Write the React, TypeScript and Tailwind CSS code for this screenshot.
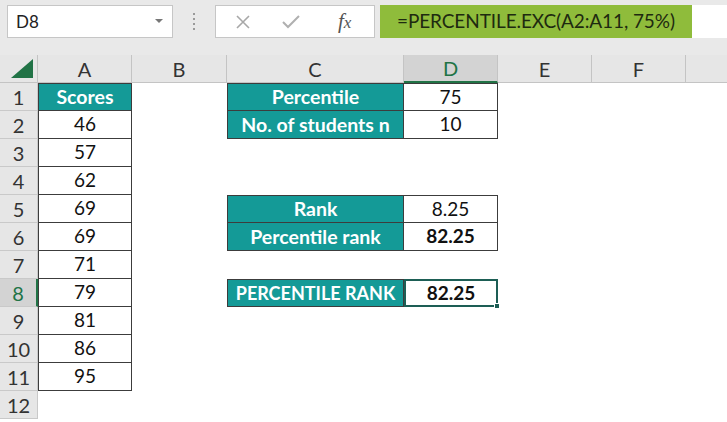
import React from 'react';

type Cell = {
  text: string;
  head?: boolean;
  bold?: boolean;
  active?: boolean;
  small?: boolean;
};

const cols = ['A', 'B', 'C', 'D', 'E', 'F', 'G'];
const scores = [46, 57, 62, 69, 69, 71, 79, 81, 86, 95];

// sheet contents keyed by "row:col"
const sheet: Record<string, Cell> = {
  '1:A': { text: 'Scores', head: true },
  '1:C': { text: 'Percentile', head: true },
  '1:D': { text: '75' },
  '2:C': { text: 'No. of students n', head: true },
  '2:D': { text: '10' },
  '5:C': { text: 'Rank', head: true },
  '5:D': { text: '8.25' },
  '6:C': { text: 'Percentile rank', head: true },
  '6:D': { text: '82.25', bold: true },
  '8:C': { text: 'PERCENTILE RANK', head: true, small: true },
  '8:D': { text: '82.25', bold: true, active: true },
};
scores.forEach((s, i) => {
  sheet[`${i + 2}:A`] = { text: String(s) };
});

// cells that carry a thin black outline
const hasBorder = (row: number, col: string) =>
  (col === 'A' && row >= 1 && row <= 11) ||
  ((col === 'C' || col === 'D') && [1, 2, 5, 6, 8].includes(row));

const FormulaBar: React.FC = () => (
  <div className="flex items-center h-[55px] bg-[#e9e9e9] pl-[7px]">
    <div className="flex items-center justify-between w-[166px] h-[33px] bg-white border border-[#c6c6c6] pl-[8px] pr-[9px] mb-[12px]">
      <span className="text-[17px] text-[#222]">D8</span>
      <svg width="8" height="5" viewBox="0 0 8 5">
        <path d="M0 0h8L4 4z" fill="#777" />
      </svg>
    </div>
    <div className="flex flex-col gap-[3px] ml-[20px] mr-[20px] mb-[12px]">
      {[0, 1, 2, 3].map((i) => (
        <span key={i} className="w-[2px] h-[2px] bg-[#9a9a9a]" />
      ))}
    </div>
    <div className="flex items-center w-[160px] h-[33px] bg-white border border-[#c6c6c6] mb-[12px]">
      <svg className="ml-[19px]" width="16" height="16" viewBox="0 0 16 16">
        <path d="M2 2l12 12M14 2L2 14" stroke="#a8a8a8" strokeWidth="1.6" />
      </svg>
      <svg className="ml-[31px]" width="18" height="14" viewBox="0 0 18 14">
        <path d="M1 7l5 5L17 1" stroke="#b0b0b0" strokeWidth="2" fill="none" />
      </svg>
      <span className="ml-[38px] italic text-[21px] text-[#555] font-['Liberation_Serif',serif]">
        f<span className="text-[17px]">x</span>
      </span>
    </div>
    <div className="flex items-center w-[312px] h-[33px] bg-[#8fbc3b] ml-[5px] pl-[17px] mb-[12px]">
      <span className="text-[19px] text-[#1e2a10] tracking-[-0.1px]">=PERCENTILE.EXC(A2:A11, 75%)</span>
    </div>
    <div className="flex-1 h-[33px] bg-white mb-[12px]" />
  </div>
);

const App: React.FC = () => {
  const rows = Array.from({ length: 12 }, (_, i) => i + 1);

  return (
    <div className="w-[727px] h-[422px] overflow-hidden bg-white font-['Lato','Noto_Sans',sans-serif]">
      <FormulaBar />
      <div className="grid grid-cols-[38px_94px_95px_177px_94px_94px_94px_94px] auto-rows-[28px]">
        {/* column header row */}
        <div className="flex items-end justify-end bg-[#e6e6e6] border-b border-r border-[#c4c4c4] pr-[4px] pb-[4px]">
          <svg width="22" height="19" viewBox="0 0 22 19">
            <path d="M22 0V19H0z" fill="#217346" />
          </svg>
        </div>
        {cols.map((c) => (
          <div
            key={c}
            className={
              c === 'D'
                ? 'flex items-center justify-center bg-[#d3d3d3] border-b-2 border-r border-b-[#217346] border-r-[#c4c4c4] text-[20px] text-[#217346]'
                : 'flex items-center justify-center bg-[#e6e6e6] border-b border-r border-[#c4c4c4] text-[20px] text-[#333]'
            }
          >
            {/* G sits past the right edge, only its header strip shows */}
            {c === 'G' ? '' : c}
          </div>
        ))}

        {rows.map((r) => (
          <React.Fragment key={r}>
            <div
              className={
                r === 8
                  ? 'flex items-center justify-center bg-[#d3d3d3] border-r-2 border-b border-r-[#217346] border-b-[#c9c9c9] text-[20px] text-[#217346]'
                  : 'flex items-center justify-center bg-[#e6e6e6] border-r border-b border-[#c9c9c9] text-[20px] text-[#333]'
              }
            >
              {r}
            </div>
            {cols.map((c) => {
              const cell = sheet[`${r}:${c}`];
              const bordered = hasBorder(r, c);
              const topEdge = bordered && !hasBorder(r - 1, c);
              const leftEdge = bordered && !hasBorder(r, cols[cols.indexOf(c) - 1] ?? '');
              if (cell?.active) {
                return (
                  <div key={c} className="relative flex items-center justify-center border-2 border-[#1d5e55] text-[19px] font-bold text-[#111]">
                    {cell.text}
                    <span className="absolute -right-[4px] -bottom-[4px] w-[6px] h-[6px] bg-[#1d5e55] border border-white" />
                  </div>
                );
              }
              return (
                <div
                  key={c}
                  className={[
                    'flex items-center justify-center whitespace-nowrap',
                    bordered ? 'border-r border-b border-[#3c3c3c]' : '',
                    topEdge ? 'border-t' : '',
                    leftEdge ? 'border-l' : '',
                    cell?.head ? 'bg-[#149a97] text-white font-bold' : 'text-[19px] text-[#111]',
                    cell?.head ? (cell.small ? 'text-[18px]' : 'text-[19.5px]') : '',
                    cell?.bold ? 'font-bold' : '',
                  ].join(' ')}
                >
                  {cell?.text}
                </div>
              );
            })}
          </React.Fragment>
        ))}
      </div>
    </div>
  );
};

export default App;
